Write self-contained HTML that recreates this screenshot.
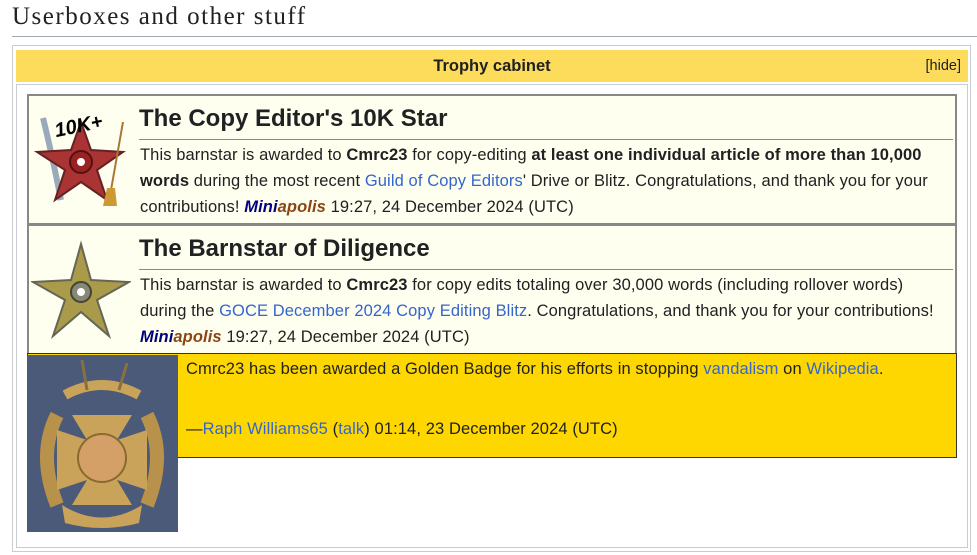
<!DOCTYPE html>
<html><head><meta charset="utf-8"><style>
body{margin:0;width:977px;height:555px;background:#fff;font-family:"Liberation Sans",sans-serif;color:#202122;position:relative;overflow:hidden}
.a{position:absolute}
h2{position:absolute;left:12px;top:0;margin:0;font:25px "Liberation Serif",serif;letter-spacing:1.5px;color:#202122;line-height:34px}
.hr{left:12px;top:36px;width:976px;height:1px;background:#a2a9b1}
.outer{left:12px;top:45px;width:959px;height:507px;border:1px solid #c8ccd1;box-sizing:border-box}
.hdr{left:16px;top:50px;width:952px;height:32px;background:#fddc5c;font-weight:bold;font-size:16.5px;text-align:center;line-height:33px}
.hide{right:7px;top:0;font-weight:normal;font-size:14.5px}
.inner{left:16px;top:84px;width:952px;height:464px;border:1px solid #c8ccd1;box-sizing:border-box}
.bs{left:27px;width:930px;height:131px;border:2px solid #888;background:#fffff0;box-sizing:border-box}
.t{position:absolute;left:110px;top:7px;font-size:24px;font-weight:bold;line-height:32px}
.line{position:absolute;left:110px;right:2px;top:43px;height:1px;background:#888}
.p{position:absolute;left:111px;right:6px;top:46px;font-size:16.5px;line-height:26px;letter-spacing:0.1px}
a{color:#3366cc;text-decoration:none}
.m1{color:#000080;font-weight:bold;font-style:italic}
.m2{color:#8b4513;font-weight:bold;font-style:italic}
.gold{left:27px;top:353px;width:930px;height:105px;background:#ffd700;border:1px solid #333;box-sizing:border-box}
.gt{font-size:16.5px;line-height:26px;letter-spacing:0.1px}
.img{left:27px;top:355px;width:151px;height:177px;background:#4a5a78}
</style></head><body>
<h2>Userboxes and other stuff</h2>
<div class="a hr"></div>
<div class="a outer"></div>
<div class="a hdr">Trophy cabinet<span class="a hide">[<a style="color:#202122">hide</a>]</span></div>
<div class="a inner"></div>

<div class="a bs" style="top:94px">
<svg class="a" style="left:2px;top:14px" width="100" height="100" viewBox="0 0 100 100">
<path d="M12 8 Q20 40 30 90" stroke="#9ab" stroke-width="6" fill="none"/>
<polygon points="50,12 60,40 92,42 66,60 76,90 50,72 24,90 34,60 6,42 40,40" fill="#a33" stroke="#622" stroke-width="2"/>
<circle cx="50" cy="52" r="11" fill="#922" stroke="#511" stroke-width="2"/><circle cx="50" cy="52" r="4" fill="#fff"/>
<line x1="92" y1="12" x2="80" y2="80" stroke="#a73" stroke-width="2"/>
<path d="M76 78 L84 78 L86 96 L72 96Z" fill="#c93"/>
<text x="24" y="24" font-family="Liberation Sans" font-style="italic" font-weight="bold" font-size="20" fill="#000" transform="rotate(-12 40 20)">10K+</text>
</svg>
<div class="t">The Copy Editor's 10K Star</div><div class="line"></div>
<div class="p">This barnstar is awarded to <b>Cmrc23</b> for copy-editing <b>at least one individual article of more than 10,000 words</b> during the most recent <a>Guild of Copy Editors</a>' Drive or Blitz. Congratulations, and thank you for your contributions! <span class="m1">Mini</span><span class="m2">apolis</span> 19:27, 24 December 2024 (UTC)</div>
</div>

<div class="a bs" style="top:224px">
<svg class="a" style="left:2px;top:14px" width="100" height="100" viewBox="0 0 100 100">
<polygon points="50,4 60,40 98,42 66,60 78,96 50,72 22,96 34,60 2,42 40,40" fill="#a99b4a" stroke="#665" stroke-width="2"/>
<circle cx="50" cy="52" r="10" fill="#887" stroke="#443" stroke-width="2"/><circle cx="50" cy="52" r="4" fill="#fff"/>
</svg>
<div class="t">The Barnstar of Diligence</div><div class="line"></div>
<div class="p">This barnstar is awarded to <b>Cmrc23</b> for copy edits totaling over 30,000 words (including rollover words) during the <a>GOCE December 2024 Copy Editing Blitz</a>. Congratulations, and thank you for your contributions! <span class="m1">Mini</span><span class="m2">apolis</span> 19:27, 24 December 2024 (UTC)</div>
</div>

<div class="a gold">
<div class="a gt" style="left:158px;top:2px">Cmrc23 has been awarded a Golden Badge for his efforts in stopping <a>vandalism</a> on <a>Wikipedia</a>.</div>
<div class="a gt" style="left:158px;top:62px">—<a>Raph Williams65</a> (<a>talk</a>) 01:14, 23 December 2024 (UTC)</div>
</div>
<div class="a img">
<svg width="151" height="177" viewBox="0 0 151 177">
<path d="M30 60 Q10 100 30 150 M120 60 Q140 100 120 150" stroke="#b8924a" stroke-width="14" fill="none"/>
<path d="M38 40 Q75 20 112 40" stroke="#c9a35a" stroke-width="10" fill="none"/>
<polygon points="45,60 105,60 90,85 120,75 120,135 90,125 105,150 45,150 60,125 30,135 30,75 60,85" fill="#c9a35a"/>
<circle cx="75" cy="103" r="24" fill="#d4a067" stroke="#8a6a30" stroke-width="2"/>
<path d="M35 150 Q75 175 115 150 L112 168 Q75 178 38 168Z" fill="#c9a35a"/>
<path d="M60 35 L55 5 M92 35 L100 8" stroke="#8a7040" stroke-width="3"/>
</svg>
</div>
</body></html>
